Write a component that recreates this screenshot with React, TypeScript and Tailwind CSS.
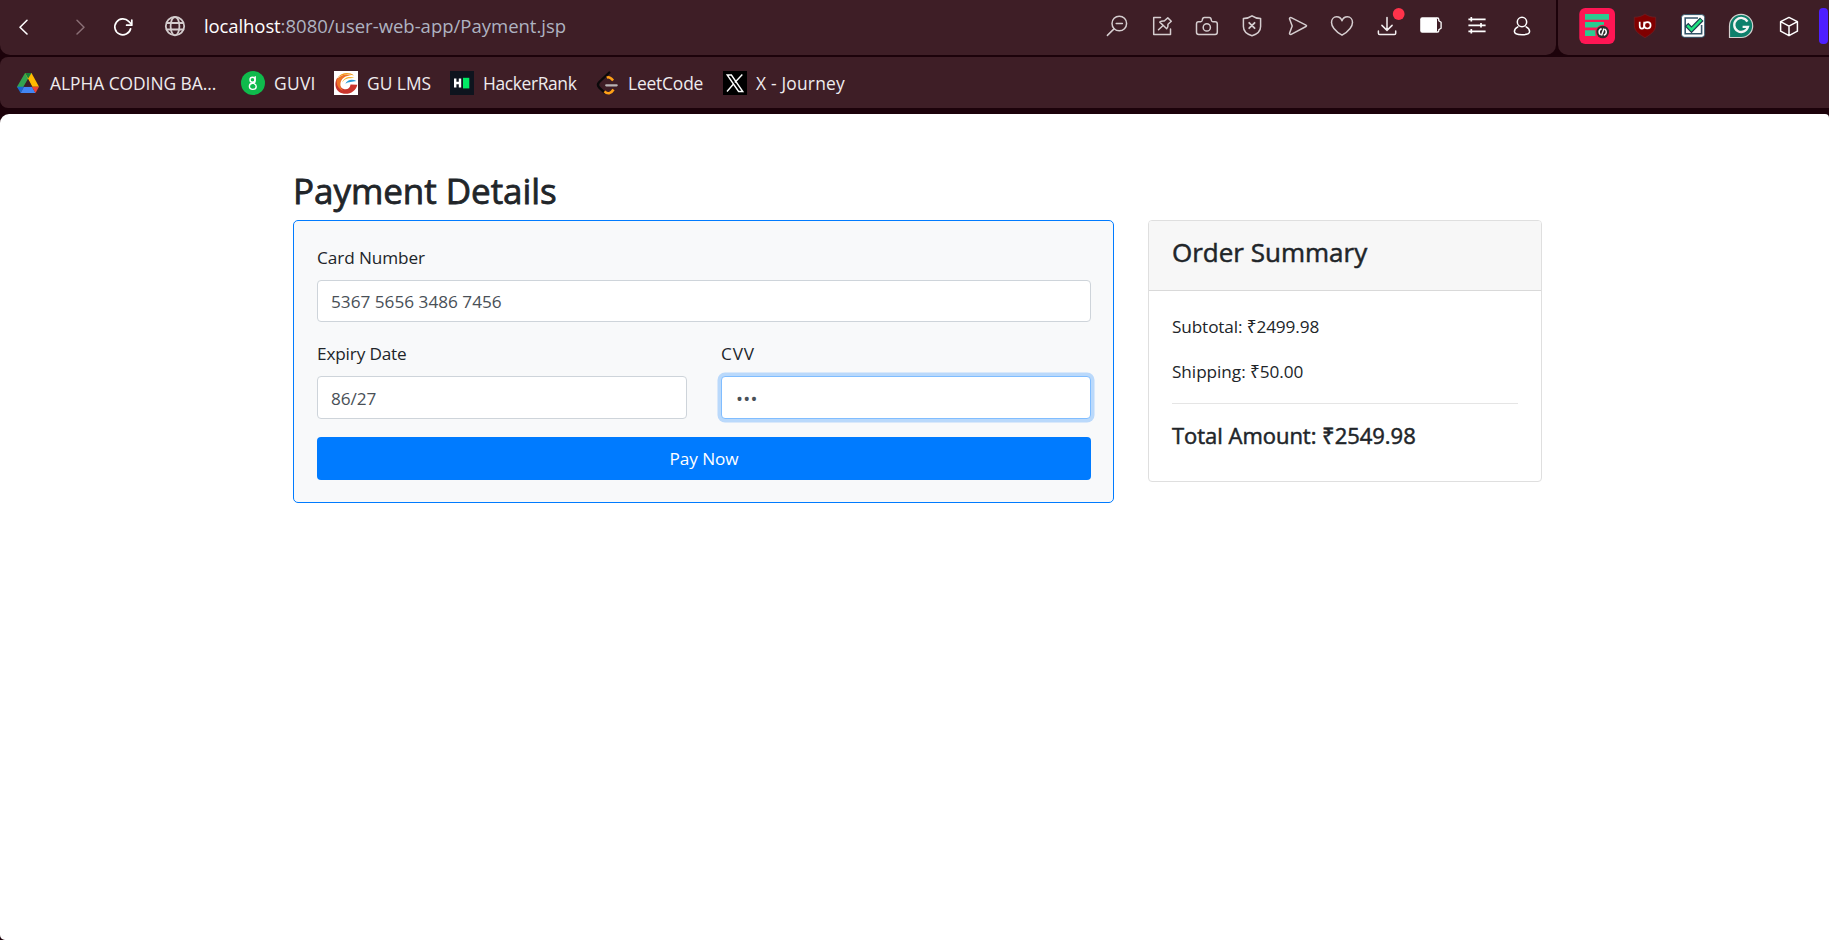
import type { ReactNode } from "react";

function ToolIcon({ children, stroke = "#d5cdcf" }: { children: ReactNode; stroke?: string }) {
  return (
    <svg className="h-[55px] w-[45px] shrink-0" viewBox="0 0 45 55" fill="none" stroke={stroke} strokeWidth="1.5" strokeLinecap="round" strokeLinejoin="round">
      {children}
    </svg>
  );
}

function ExtensionIcon({ children }: { children: ReactNode }) {
  return (
    <svg className="h-[55px] w-[48px] shrink-0" viewBox="0 0 48 55" fill="none">
      {children}
    </svg>
  );
}

function NavigationIcons() {
  return (
    <svg className="h-[55px] w-[203px] shrink-0" viewBox="0 0 203 55" fill="none" strokeLinecap="round" strokeLinejoin="round">
      <path d="M27 20.3 20 27.2l7 6.8" stroke="#fff" strokeWidth="1.6" />
      <path d="M77 20.3 84 27.2l-7 6.8" stroke="#8a6f76" strokeWidth="1.5" />
      <path d="M130.6 28.8a8 8 0 1 1-1.9-7.4l2.6 2.6" stroke="#fff" strokeWidth="1.7" />
      <path d="M131.8 20v5.2h-5.2" stroke="#fff" strokeWidth="1.7" />
      <g stroke="#d3cccd" strokeWidth="1.8">
        <circle cx="175" cy="26.2" r="9.2" />
        <ellipse cx="175" cy="26.2" rx="4.4" ry="9.2" />
        <path d="M166.7 23h16.6M166.7 29.5h16.6" />
      </g>
    </svg>
  );
}

function BrowserActions() {
  return (
    <div className="flex">
      <ToolIcon>
        <circle cx="25.3" cy="23.5" r="7.3" />
        <path d="M20 28.9 13.4 35.4M22.2 23.5h6.2" />
      </ToolIcon>
      <ToolIcon>
        <path d="M21.5 17.6h-6.8v16.9h16.8V29" />
        <path d="M28.8 17.9 32.3 21.200 29 24.2c.2 2-.2 3.400-1.300 4.500l-6.900-6.600c1.200-1 2.600-1.300 4.400-1.100ZM23.8 25.700l-4.300 4" />
      </ToolIcon>
      <ToolIcon>
        <path d="M14.5 21.8h2.2c1.2 0 1.4-.6 1.6-1.8.2-1.6.8-2.4 2-2.4h5c1.2 0 1.8.8 2 2.4.2 1.2.4 1.8 1.6 1.8h2.2c1.4 0 2.2.8 2.2 2.2v8.2c0 1.4-.8 2.2-2.2 2.2H14.7c-1.4 0-2.2-.8-2.2-2.2V24c0-1.4.8-2.2 2-2.2Z" />
        <circle cx="22.8" cy="27.4" r="3.6" />
      </ToolIcon>
      <ToolIcon>
        <path d="M23 15.8c2.6 1.9 5.2 2.6 8.6 2.8v7.9c0 4.7-4.2 7.9-8.6 9.3-4.4-1.4-8.6-4.6-8.6-9.3v-7.9c3.4-.2 6-.9 8.6-2.8Z" />
        <path d="m20.2 22.8 5.4 5.4M25.6 22.8l-5.4 5.4" strokeWidth="1.8" />
      </ToolIcon>
      <ToolIcon>
        <path d="M17.2 17.7 32 25.1c.7.3.7 1.1 0 1.4L17.2 34.4c-1 .5-2-.3-1.6-1.4l2.6-6.9-2.6-7c-.4-1 .6-1.9 1.6-1.4Z" />
      </ToolIcon>
      <ToolIcon>
        <path d="M23 35.2c-5.5-3.400-10.500-7.800-10.500-12.800 0-3.200 2.200-5.600 5.100-5.600 2.500 0 4.500 1.500 5.400 4 .9-2.500 2.900-4 5.400-4 2.900 0 5.100 2.400 5.100 5.600 0 5-5 9.400-10.500 12.800Z" />
      </ToolIcon>
      <ToolIcon stroke="#f3eff0">
        <path d="M23 17.500v12.700M17.900 25.400 23 30.400l5.100-5M14.400 31v2.200c0 .9.400 1.300 1.300 1.300h14.700c.9 0 1.300-.4 1.300-1.300V31" />
        <circle cx="34.700" cy="14" r="5.900" fill="#ff334b" stroke="none" />
      </ToolIcon>
      <ToolIcon stroke="#fff">
        <rect x="11.200" y="17.300" width="16.800" height="15.400" rx="2" fill="#fff" stroke="none" />
        <path d="M27 18h1.400c1 0 1.400.5 1.400 1.400v1.400l2.300 1.500v6l-2.300 1.500v1c0 .8-.4 1.200-1.400 1.200H27" strokeWidth="1.300" />
      </ToolIcon>
      <ToolIcon stroke="#fff">
        <path d="M14.400 19.300h17.200M14.400 25.300h17.200M14.400 31.300h17.200M17.300 17v4.600M27 23v4.600M17.300 29v4.600" strokeLinecap="butt" strokeWidth="1.700" />
      </ToolIcon>
      <ToolIcon stroke="#fff">
        <circle cx="23" cy="22" r="4.700" />
        <path d="M18.900 26.800c-2.300 1.200-3.500 2.900-3.500 4.700 0 2.200 2.200 3.200 7.600 3.200s7.600-1 7.600-3.200c0-1.800-1.200-3.500-3.500-4.700" />
      </ToolIcon>
    </div>
  );
}

function Extensions() {
  return (
    <>
      <ExtensionIcon>
        <rect x="6.300" y="8" width="35.700" height="36" rx="6" fill="#ff1654" />
        <path d="M12 14h24v5.700H12ZM12 22h19v5.600H12ZM12 30.300h10.500V36H12Z" fill="#2bcb90" />
        <circle cx="29.700" cy="32" r="7.200" fill="#ff1654" />
        <circle cx="29.700" cy="32" r="6.300" fill="#2d2d2d" />
        <path d="M28.600 28.800c-1.600.5-2.500 1.700-2.500 3.200s.6 2.300 1.500 2.900M30.800 35.200c1.600-.5 2.500-1.700 2.500-3.200s-.6-2.300-1.500-2.900M28.500 35.400l2.500-6.800" stroke="#fff" strokeWidth="1.500" />
      </ExtensionIcon>
      <ExtensionIcon>
        <path d="M24 14c3 2.300 6.500 3.200 10.700 3.200v8c0 6.200-5.700 9.500-10.700 12.500-5-3-10.700-6.300-10.700-12.500v-8C17.500 17.200 21 16.300 24 14Z" fill="#800000" stroke="#6d2025" strokeWidth=".8" />
        <path d="M18.700 21.800v3.900c0 2 .9 2.900 2.200 2.900s2.300-.9 2.300-2.900v-3.900" stroke="#fff" strokeWidth="1.700" />
        <circle cx="26.400" cy="25.300" r="3.200" stroke="#fff" strokeWidth="1.700" />
      </ExtensionIcon>
      <ExtensionIcon>
        <rect x="12.500" y="14.600" width="23.200" height="22.700" rx="3" fill="#fff" stroke="#274d63" strokeWidth=".9" />
        <path d="M29 18H16.200v15.700h16.400V25" stroke="#35566b" strokeWidth="1.600" />
        <path d="m17.500 24.500 5 5.200 10.300-10.500" stroke="#1d3f50" strokeWidth="5" />
        <path d="m18.300 25.300 4.200 4.400 9.600-9.800" stroke="#1fe27f" strokeWidth="2.600" />
      </ExtensionIcon>
      <ExtensionIcon>
        <path d="M12.500 37.500V26A11.600 11.600 0 1 1 24 37.500Z" fill="#0d806c" stroke="#d5d1cf" strokeWidth="1.200" />
        <path d="M30.400 21.600a7 7 0 1 0 .6 5.200h-5.400" stroke="#f4f4f4" strokeWidth="2.300" />
      </ExtensionIcon>
      <ExtensionIcon>
        <path d="m24 17.400 8.400 4.300v9.500L24 35.700l-8.400-4.500v-9.500ZM15.600 21.700l8.400 4.400 8.400-4.400M24 26.100v9.600" stroke="#fff" strokeWidth="1.500" strokeLinejoin="round" />
      </ExtensionIcon>
    </>
  );
}

function Bookmark({ className, icon, children }: { className: string; icon: ReactNode; children: ReactNode }) {
  return (
    <div className={`flex shrink-0 items-center gap-[9px] whitespace-nowrap text-[17.4px] leading-[26px] ${className}`}>
      <svg className="size-6 shrink-0" viewBox="0 0 24 24" fill="none">
        {icon}
      </svg>
      <span>{children}</span>
    </div>
  );
}

function BookmarksBar() {
  return (
    <div className="mt-[2px] flex h-[51px] items-center rounded-l-lg bg-[#3e1e26] pl-[17px] text-[#efecee]">
      <Bookmark
        className="w-[224px] tracking-[-0.04px]"
        icon={
          <>
            <path d="M8 2h6.500L3.600 20.500 0 15.700Z" fill="#32a350" />
            <path d="M8 2h6.500L22 15.700h-7.200Z" fill="#ffba00" />
            <path d="M8 2h6.500l-3.300 5.600Z" fill="#188038" />
            <path d="M0 15.700h7L3.600 22Z" fill="#1967d2" />
            <path d="M7 15.700h8L18.500 22H3.600Z" fill="#4285f4" />
            <path d="M14.800 15.700H22L18.500 22Z" fill="#ea4335" />
            <path d="M11.200 8 15.400 15.700H7Z" fill="#3e1e26" />
          </>
        }
      >
        ALPHA CODING BA...
      </Bookmark>
      <Bookmark
        className="w-[93px] tracking-[0.3px]"
        icon={
          <>
            <circle cx="12" cy="12" r="12" fill="#0fba4c" />
            <circle cx="11.500" cy="8.800" r="2.500" stroke="#fff" strokeWidth="1.400" />
            <path d="M14.200 5.800v3.600c0 1.900-.8 2.700-2.700 2.900-2.200.2-3.100 1.300-3.100 3s1.400 3.100 3.400 3.100 3.400-1.200 3.400-2.900c0-1.300-.6-2.200-1.800-2.600" stroke="#fff" strokeWidth="1.400" strokeLinecap="round" />
          </>
        }
      >
        GUVI
      </Bookmark>
      <Bookmark
        className="w-[116px]"
        icon={
          <>
            <path d="M0 0h24v24H0Z" fill="#fff" />
            <path d="M20 4.500C15 .5 7 1.500 3 7.300c4.500-4 10.500-4.600 17-2.800Z" fill="#f39a1b" />
            <path d="M3 7.300C-.5 13.500 2 20.500 8 22.300c7 2 14-2 15.300-8.600l-6.800-.2c-.2 3.500-3 5.300-6 4.700-5-.9-6.400-6.200-2.300-10.600Z" fill="#c9342c" />
            <path d="M2.500 9C5 4.500 11 2.500 17.500 4.500 11.500 4.500 7.500 7 6.500 12c-.5 3 .5 5.500 2.500 7.500-4.500-1.300-6.500-5-6.500-10.500Z" fill="#ee7328" />
            <path d="M20.500 7c-5-2.500-11-.5-12.300 4.500C10.500 7.500 15 7 20.500 7Z" fill="#f7b42c" />
            <path d="M22.500 10c-4.500-2.300-9-1.300-11.200 2.700 3-2.200 7-1.700 11.200-2.700Z" fill="#249ad6" />
          </>
        }
      >
        GU LMS
      </Bookmark>
      <Bookmark
        className="w-[145px] tracking-[-0.36px]"
        icon={
          <>
            <path d="M0 0h24v24H0Z" fill="#0e141e" />
            <path d="M5.200 7.500v9M10 7.500v9M5 12h5" stroke="#fff" strokeWidth="2.400" />
            <path d="M13 6.800h6.300v10.600H13Z" fill="#00ea64" />
          </>
        }
      >
        HackerRank
      </Bookmark>
      <Bookmark
        className="w-[128px] tracking-[-0.18px]"
        icon={
          <>
            <path d="M14.300 1.500 4.300 11c-1.600 1.700-1.600 4 0 5.700l5 4.600" stroke="#0b090a" strokeWidth="2.400" strokeLinecap="round" />
            <path d="M11.800 6.600c2-1 3.800-.3 6.300 2.900" stroke="#ffa116" strokeWidth="2.400" />
            <path d="M9.500 20.300c3 3.200 6.500 2.500 9-1.800" stroke="#ffa116" strokeWidth="2.600" />
            <path d="M11.200 14.300h10.500" stroke="#b9b4b5" strokeWidth="2.200" strokeLinecap="round" />
          </>
        }
      >
        LeetCode
      </Bookmark>
      <Bookmark
        className="tracking-[0.2px]"
        icon={
          <>
            <path d="M0 0h24v24H0Z" fill="#000" />
            <path d="M4.200 4h4.200l11.400 16.500h-4.200ZM19.300 3.600l-7.400 7.800M10.300 13.300 4 20.500" stroke="#fff" strokeWidth="1.400" />
          </>
        }
      >
        X - Journey
      </Bookmark>
    </div>
  );
}

function PaymentForm() {
  return (
    <form className="flex h-[283px] w-[821px] flex-col rounded-[5px] border border-[#007bff] bg-[#f8f9fa] pt-[24px] pr-[22px] pl-[23px] text-[17.2px] leading-[26px]">
      <label className="tracking-[-0.09px]">Card Number</label>
      <div className="mt-[9px] flex h-[42px] items-center rounded-[4px] border border-[#ced4da] bg-white px-[13px] pt-px text-[#495057]">5367 5656 3486 7456</div>
      <div className="mt-[19px] grid grid-cols-2 gap-[34px]">
        <div>
          <label className="block tracking-[-0.16px]">Expiry Date</label>
          <div className="mt-[9px] flex h-[43px] items-center rounded-[4px] border border-[#ced4da] bg-white px-[13px] pt-[2px] tracking-[-0.1px] text-[#495057]">86/27</div>
        </div>
        <div>
          <label className="block tracking-[0.8px]">CVV</label>
          <div className="mt-[9px] flex h-[43px] items-center rounded-[4px] border border-[#80bdff] bg-white px-[14px] pt-[2px] text-[18.5px] tracking-[0.3px] text-[#495057] shadow-[0_0_0_3.5px_rgba(0,123,255,0.25)]">•••</div>
        </div>
      </div>
      <button type="button" className="mt-[18px] h-[43px] rounded-[4px] bg-[#007bff] tracking-[-0.1px] text-white">
        Pay Now
      </button>
    </form>
  );
}

function OrderSummary() {
  return (
    <aside className="h-[262px] w-[394px] rounded-[4px] border border-[#dfdfdf] bg-white text-[17.2px] leading-[26px]">
      <h4 className="h-[70px] rounded-t-[3px] border-b border-[#d9d9d9] bg-[#f7f7f7] px-[23px] pt-[16px] text-[26px] leading-[30px] [-webkit-text-stroke:0.5px]">Order Summary</h4>
      <div className="px-[23px] pt-[23px]">
        <p className="tracking-[-0.12px]">Subtotal: ₹2499.98</p>
        <p className="mt-[19px] tracking-[-0.05px]">Shipping: ₹50.00</p>
        <hr className="mt-[18px] border-[#e5e5e5]" />
        <h5 className="mt-[18px] text-[22px] leading-[26px] tracking-[-0.03px] [-webkit-text-stroke:0.5px]">Total Amount: ₹2549.98</h5>
      </div>
    </aside>
  );
}

export default function App() {
  return (
    <div className="flex h-[940px] w-[1829px] flex-col overflow-hidden bg-[#1c020a] font-['Open_Sans','Noto_Sans',sans-serif] text-[#212529]">
      <div className="flex h-[55px] gap-[2px]">
        <header className="flex w-[1556px] rounded-b-[10px] bg-[#3e1e26]">
          <NavigationIcons />
          <div className="w-[891px] pt-[13px] pl-px text-[18.5px] leading-[26px] whitespace-nowrap text-[#aeb3c1]">
            <span className="tracking-[-0.1px] text-white">localhost</span>:8080/user-web-app/Payment.jsp
          </div>
          <BrowserActions />
        </header>
        <div className="flex flex-1 rounded-bl-[10px] bg-[#3e1e26] pl-[15px]">
          <Extensions />
          <div className="mt-2 ml-[6px] h-9 w-[9px] rounded-[4px] bg-[#4e1fff]" />
        </div>
      </div>
      <BookmarksBar />
      <main className="mt-[6px] flex-1 rounded-tl-[9px] rounded-tr-[4px] rounded-bl-[5px] bg-white pt-[56px] pl-[293px]">
        <h2 className="mb-[8px] text-[35px] leading-[42px] tracking-[-0.05px] [-webkit-text-stroke:0.8px]">Payment Details</h2>
        <div className="flex items-start gap-[34px]">
          <PaymentForm />
          <OrderSummary />
        </div>
      </main>
    </div>
  );
}
